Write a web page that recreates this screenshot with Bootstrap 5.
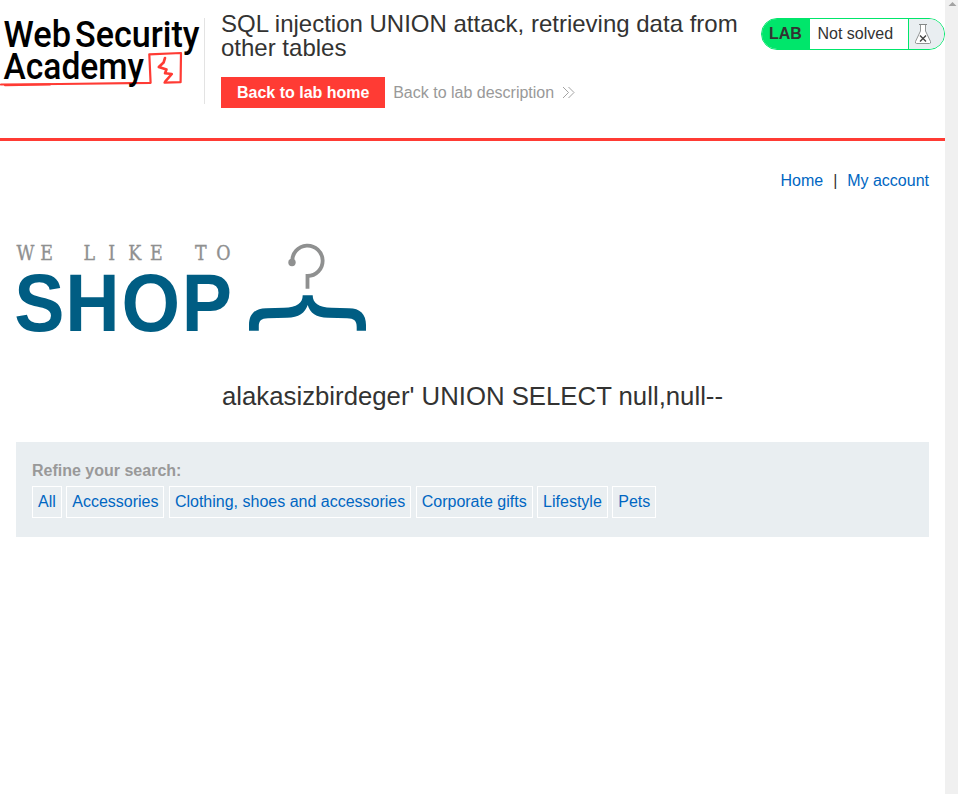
<!DOCTYPE html>
<html lang="en">
<head>
<meta charset="utf-8">
<meta name="viewport" content="width=device-width, initial-scale=1">
<title>SQL injection UNION attack, retrieving data from other tables</title>
<link href="https://cdn.jsdelivr.net/npm/bootstrap@5.3.0/dist/css/bootstrap.min.css" rel="stylesheet">
<style>
body{font-family:"Liberation Sans",Arial,sans-serif;font-size:16px;color:#333332;line-height:18px;overflow:hidden}
a{color:#0066c2}
.page{width:945px}
.gutter{width:13px;background:#f0f0f0}
.gutter svg{display:block}
.lab-header{height:141px;border-bottom:3px solid #ff3b34}
.logo-box{width:205px;height:86px;margin-top:18px;border-right:1px solid #e3e3e3}
.logo-box svg{display:block;overflow:visible}
.title-box{width:540px;padding:12px 0 0 16px}
.lab-title{font-size:24px;line-height:24px;margin:0 0 17px}
.btn-lab{background:#ff3b34;color:#fff;border-radius:0;border:0;font-weight:700;line-height:18px;padding:7px 15.700px 6px 16px;height:31px}
.btn-lab:hover{background:#e5302a;color:#fff}
.desc-link{color:#999}
.lab-status{width:184px;height:32px;margin-top:18px;border:1px solid #00e66b;border-radius:16px;overflow:hidden;line-height:30px}
.lab-tag{width:48px;background:#00e66b;padding-left:7px;font-weight:700}
.lab-state{width:98px;padding-left:7.500px}
.lab-flask{width:36px;border-left:1px solid #00e66b;background:#e9eef1}
.lab-tag,.lab-state,.lab-flask{flex-shrink:0}
.lab-flask svg{display:block}
.top-links{padding-top:31px;height:103px}
.link-sep{padding:0 9.900px}
.shop-logo{display:block;height:90px;overflow:visible}
.query{font-size:25.760px;line-height:30px;margin:47px 0 31px}
.refine{height:95px;background:#e9eef1;padding:20px 16px 0}
.refine-label{color:#999;font-weight:700;margin-bottom:6px}
.filters{gap:4.45px}
.filters a{border:1px solid #fff;padding:6px 5px;height:32px}
</style>
<script src="https://cdn.jsdelivr.net/npm/bootstrap@5.3.0/dist/js/bootstrap.bundle.min.js"></script>
</head>
<body class="bg-white">
<div class="d-flex vh-100">
<div class="page flex-shrink-0">
  <header class="lab-header d-flex align-items-start">
    <div class="logo-box flex-shrink-0">
      <svg width="204" height="86" viewBox="0 18 204 86" role="img" aria-label="Web Security Academy">
        <g font-family="Roboto, sans-serif" font-weight="500" font-size="37.500" fill="#000">
          <text x="3.500" y="46.700" textLength="67.500" lengthAdjust="spacingAndGlyphs">Web</text>
          <text x="75" y="46.700" textLength="124.500" lengthAdjust="spacingAndGlyphs">Security</text>
        </g>
        <g fill="none" stroke="#ff3b34" stroke-linejoin="round" stroke-linecap="round">
          <path d="M1 84.500L60 84L150.600 82.800L149.300 54.300L181 53L180.600 82.200L164.500 82.600" stroke-width="2.200"/>
          <path d="M5 85.200L50 84.600" stroke-width="2"/>
          <path d="M165 58L163.600 62.500L158.800 67L166.500 69.600L165 73.300L171.800 74L165.200 81.700" stroke-width="2.600"/>
        </g>
        <text x="3.500" y="79.300" textLength="140.500" lengthAdjust="spacingAndGlyphs" font-family="Roboto, sans-serif" font-weight="500" font-size="37.500" fill="#000">Academy</text>
      </svg>
    </div>
    <div class="title-box flex-shrink-0">
      <h2 class="lab-title fw-normal">SQL injection UNION attack, retrieving data from other tables</h2>
      <div class="d-flex align-items-center gap-2">
        <a class="btn btn-lab" href="#">Back to lab home</a>
        <a class="desc-link text-decoration-none d-flex align-items-center gap-2" href="#">Back to lab description
          <svg width="14" height="14" viewBox="0 0 14 14" fill="none" stroke="#999" stroke-width=".9"><path d="M1 1L6.500 6.500L1 12M6.500 1L12 6.500L6.500 12"/></svg>
        </a>
      </div>
    </div>
    <div class="lab-status d-flex ms-auto">
      <div class="lab-tag">LAB</div>
      <div class="lab-state">Not solved</div>
      <div class="lab-flask">
        <svg width="35" height="30" viewBox="909 19 35 30" fill="none">
          <path d="M920.500 24.500V31L915.500 41.500Q915 43.500 916.500 43.500H929.500Q931 43.500 930.500 41.500L925.500 31V24.500Z" fill="#fff" stroke="#929595"/>
          <path d="M919 24.500H927" stroke="#858888"/>
          <path d="M920 35.500L926 41.500M926 35.500L920 41.500" stroke="#444" stroke-width="1.400"/>
        </svg>
      </div>
    </div>
  </header>
  <main class="px-3">
    <nav class="top-links d-flex justify-content-end">
      <a class="text-decoration-none" href="#">Home</a><span class="link-sep">|</span><a class="text-decoration-none" href="#">My account</a>
    </nav>
    <svg class="shop-logo" width="352" height="90" viewBox="16 244 352 90" role="img" aria-label="We like to shop">
      <text transform="scale(.85 1)" font-family="DejaVu Serif, serif" font-size="20.500" fill="#8f9090" stroke="#8f9090" stroke-width=".35" y="259.700" x="19.300 47.500 62 98.300 127.500 151 176.500 192 229.500 254.500">WE LIKE TO</text>
      <text transform="scale(.93 1)" font-family="Liberation Sans, Arial, sans-serif" font-weight="700" font-size="81" fill="#005d83" y="330.700" x="15.200 70.200 130.700 195.500">SHOP</text>
      <path d="M292.300 262A15.200 15.200 0 1 1 307.500 276V288.700" fill="none" stroke="#8f9090" stroke-width="3.800"/>
      <circle cx="292" cy="262.500" r="3.700" fill="#8f9090"/>
      <path d="M249 330.700V325C249 314 255 308.300 266 308.200L284 307.800C297 307.500 302.700 303 302.700 295.200H312.700C312.700 303 318.500 307.500 331.500 307.800L349 308.200C360 308.300 366 314 366 325V330.700H356.700V327C356.700 321 354 318.300 347 318.300L328 317.800C316 317.500 310 313 307.700 305C305 313 299 317.500 287 317.800L268 318.300C261 318.300 258.800 321 258.800 327V330.700Z" fill="#005d83"/>
    </svg>
    <h1 class="query text-center fw-normal">alakasizbirdeger' UNION SELECT null,null--</h1>
    <section class="refine">
      <div class="refine-label">Refine your search:</div>
      <div class="filters d-flex">
        <a class="text-decoration-none" href="#">All</a>
        <a class="text-decoration-none" href="#">Accessories</a>
        <a class="text-decoration-none" href="#">Clothing, shoes and accessories</a>
        <a class="text-decoration-none" href="#">Corporate gifts</a>
        <a class="text-decoration-none" href="#">Lifestyle</a>
        <a class="text-decoration-none" href="#">Pets</a>
      </div>
    </section>
  </main>
</div>
<div class="gutter flex-shrink-0"><svg width="13" height="10" viewBox="0 0 13 10"><path d="M3.500 6L7.500 2L11.500 6Z" fill="#a3a3a3"/></svg></div>
</div>
</body>
</html>
